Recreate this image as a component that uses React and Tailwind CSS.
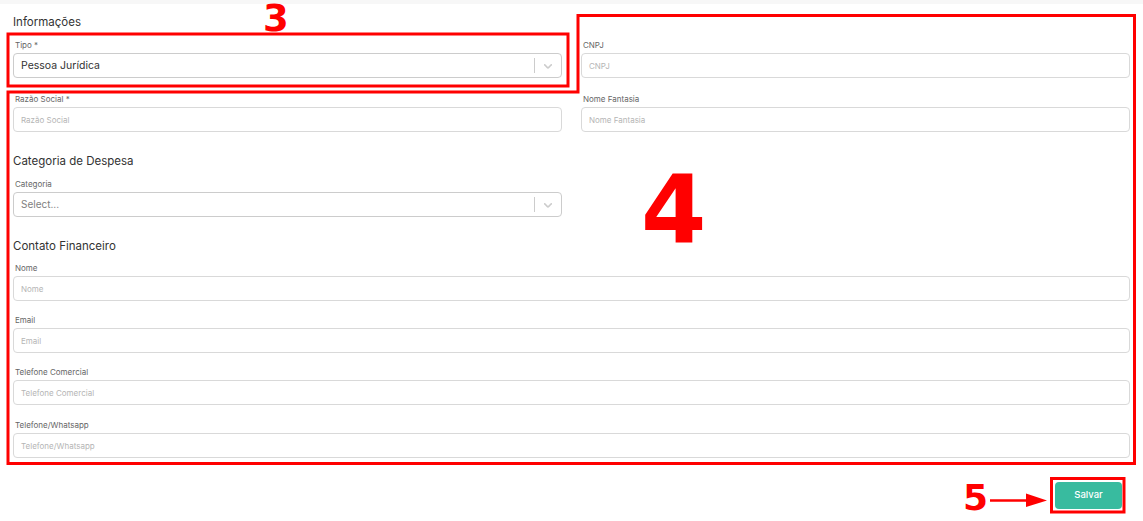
import React from 'react';

const font = { fontFamily: 'Inter, "Open Sans", sans-serif' };

const Chevron = () => (
    <svg width="14" height="14" viewBox="0 0 20 20" className="fill-[#cccccc]">
        <path d="M4.516 7.548c0.436-0.446 1.043-0.481 1.576 0l3.908 3.747 3.908-3.747c0.533-0.481 1.141-0.446 1.574 0 0.436 0.445 0.408 1.197 0 1.615-0.406 0.418-4.695 4.502-4.695 4.502-0.217 0.223-0.502 0.335-0.787 0.335s-0.57-0.112-0.789-0.335c0 0-4.287-4.084-4.695-4.502s-0.436-1.17 0-1.615z" />
    </svg>
);

const Label = ({ children }) => (
    <div className="h-[12px] mb-[2px] pl-[2px] text-[8px] leading-[12px] text-[#666]">{children}</div>
);

const Field = ({ label, placeholder }) => (
    <div>
        <Label>{label}</Label>
        <div className="h-[25px] rounded-[4px] border border-[#d9d9d9] bg-white flex items-center px-[7px] text-[8px] text-[#b5b5b5]">
            {placeholder}
        </div>
    </div>
);

const SelectField = ({ label, value, muted }) => (
    <div>
        <Label>{label}</Label>
        <div className="h-[25px] rounded-[4px] border border-[#cccccc] bg-white flex items-center pl-[7px]">
            <span className={muted ? 'flex-1 text-[10px] text-[#808080]' : 'flex-1 text-[10.5px] text-[#333]'}>{value}</span>
            <span className="w-px h-[15px] bg-[#cccccc]" />
            <span className="px-[6px] flex items-center"><Chevron /></span>
        </div>
    </div>
);

const Heading = ({ children, className }) => (
    <h2 className={`text-[11.5px] leading-[16px] text-[#333] ${className}`}>{children}</h2>
);

const Annotations = () => (
    <div className="absolute inset-0 pointer-events-none" style={{ fontFamily: '"DejaVu Sans", sans-serif' }}>
        <svg width="1143" height="521" className="absolute left-0 top-0">
            <rect x="8" y="34" width="560" height="52" fill="none" stroke="#ff0000" strokeWidth="3" />
            <polygon points="8,92 578,92 578,15.5 1134.5,15.5 1134.5,463.5 8,463.5" fill="none" stroke="#ff0000" strokeWidth="3" />
            <rect x="1051.5" y="478.5" width="72.5" height="33.5" fill="none" stroke="#ff0000" strokeWidth="3" />
            <line x1="990" y1="500.5" x2="1028" y2="500.5" stroke="#ff0000" strokeWidth="2.5" />
            <polygon points="1026,493.5 1047,500.5 1026,507" fill="#ff0000" />
        </svg>
        <span className="absolute left-[263px] top-[5px] text-[37px] leading-[28px] font-bold text-[#ff0000]">3</span>
        <span className="absolute left-[641px] top-[164px] text-[94px] leading-none font-bold text-[#ff0000]">4</span>
        <span className="absolute left-[963px] top-[480px] text-[36px] leading-none font-bold text-[#ff0000]">5</span>
    </div>
);

export default function App() {
    return (
        <div className="relative w-[1143px] h-[521px] bg-white overflow-hidden" style={font}>
            <div className="h-[4px] bg-[#f7f7f7]" />
            <div className="px-[13px]">
                <Heading className="mt-[10px]">Informações</Heading>

                <div className="grid grid-cols-2 gap-x-[19px] gap-y-[15px] mt-[9px]">
                    <SelectField label="Tipo *" value="Pessoa Jurídica" />
                    <Field label="CNPJ" placeholder="CNPJ" />
                    <Field label="Razão Social *" placeholder="Razão Social" />
                    <Field label="Nome Fantasia" placeholder="Nome Fantasia" />
                </div>

                <Heading className="mt-[21px]">Categoria de Despesa</Heading>
                <div className="grid grid-cols-2 gap-x-[19px] mt-[9px]">
                    <SelectField label="Categoria" value="Select..." muted />
                </div>

                <Heading className="mt-[21px]">Contato Financeiro</Heading>
                <div className="flex flex-col gap-[13px] mt-[8px]">
                    <Field label="Nome" placeholder="Nome" />
                    <Field label="Email" placeholder="Email" />
                    <Field label="Telefone Comercial" placeholder="Telefone Comercial" />
                    <div className="mt-px">
                        <Field label="Telefone/Whatsapp" placeholder="Telefone/Whatsapp" />
                    </div>
                </div>
            </div>

            <div className="flex justify-end pr-[21px] mt-[24px]">
                <button className="w-[67px] h-[27px] rounded-[4px] bg-[#38bb9f] text-white text-[9.5px] font-medium">
                    Salvar
                </button>
            </div>

            <Annotations />
        </div>
    );
}
